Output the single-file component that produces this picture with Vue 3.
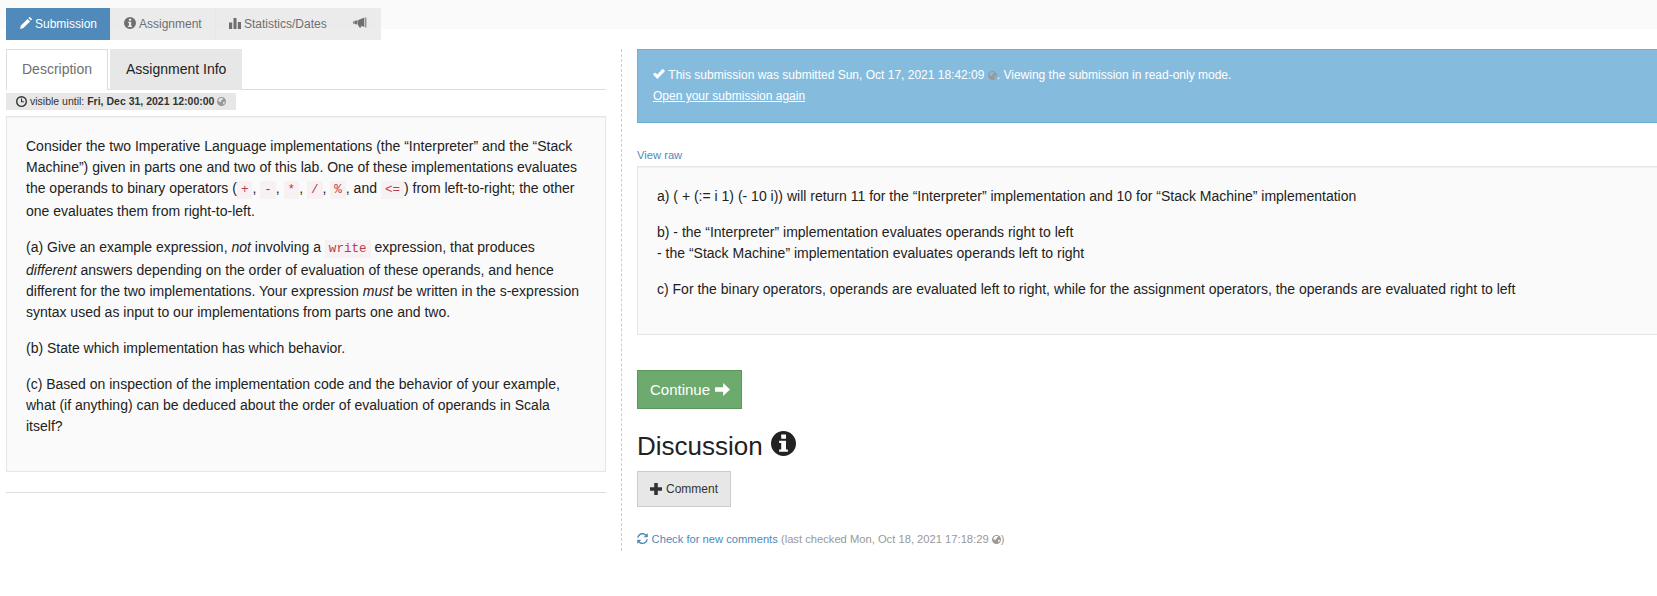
<script setup>
import { h } from 'vue'

const shapes = {
  pencil: ['M0 12 .9 8.6 7.6 1.9 10.1 4.4 3.4 11.1Z M8.4 1.1 9.2.3Q9.7-.2 10.2.3L11.7 1.8Q12.2 2.3 11.7 2.8L10.9 3.6Z'],
  info: ['M6 0A6 6 0 1 0 6 12A6 6 0 1 0 6 0Z M4.9 1.7H7.2V3.7H4.9Z M3.9 4.7H7.2V8.9H8.1V10H3.9V8.9H4.9V5.8H3.9Z'],
  bars: ['M0 5.5H3.2V12H0Z M4.5 1H7.5V12H4.5Z M8.8 5H12V12H8.8Z'],
  horn: ['M0 4.4H1V6.4H0Z M1.4 4 4.4 3.3V7.6L1.4 7Z M4.9 3.2 11.3.6V10L8 8.8 8.4 10.4H6.4L4.9 7.7Z M12.3.6H13.3V10.6H12.3Z'],
  clock: ['M6 0A6 6 0 1 0 6 12A6 6 0 1 0 6 0Z M6 1.5A4.5 4.5 0 1 1 6 10.5A4.5 4.5 0 1 1 6 1.5Z M5.4 2.8H6.6V5.7H8.8V6.9H5.4Z'],
  globe: ['M6 0A6 6 0 1 0 6 12A6 6 0 1 0 6 0Z M5 1.2 7.6 1.4 8.2 2.8 6.8 3.4 6.4 4.8 4.8 5.4 5.2 6.6 4 6.8 1.6 5.2 2.6 2.8Z M8.2 6.6 10.6 6.2 10 8.4 8.2 10Z'],
  check: ['M0 6.5 2 4.4 4.3 6.4 9.7.8 12 3.1 4.3 10.9Z'],
  arrow: ['M0 3.9H7.6V0L14 6 7.6 12V8.1H0Z'],
  plus: ['M4.2 0H7.8V4.2H12V7.8H7.8V12H4.2V7.8H0V4.2H4.2Z'],
  refresh: ['M.2 5.2C.6 2.2 3 0 6 0 7.6 0 9.1.6 10.2 1.7L11.8.2V4.6H7.3L9.1 2.8C8.3 2 7.2 1.5 6 1.5 3.8 1.5 2.1 3 1.7 5.2Z M11.8 6.8C11.4 9.8 9 12 6 12 4.4 12 2.9 11.4 1.8 10.3L.2 11.8V7.4H4.7L2.9 9.2C3.7 10 4.8 10.5 6 10.5 8.2 10.5 9.9 9 10.3 6.8Z'],
}
const boxes = { horn: '0 0 14 12', arrow: '0 0 14 12' }
const Icon = (p) =>
  h('svg', { viewBox: boxes[p.name] || '0 0 12 12', fill: 'currentColor', 'fill-rule': 'evenodd', 'aria-hidden': 'true' },
    shapes[p.name].map((d) => h('path', { d })))
Icon.props = ['name']
</script>

<template>
  <div class="page">
    <header class="top">
      <nav class="menu">
        <a class="item active"><Icon name="pencil" class="ic" />Submission</a>
        <a class="item second"><Icon name="info" class="ic" />Assignment</a>
        <a class="item third"><Icon name="bars" class="ic" />Statistics/Dates</a>
        <a class="item last"><Icon name="horn" class="ic horn" /></a>
      </nav>
    </header>
    <main class="cols">
      <section class="left">
        <div class="tabs">
          <a class="tab current">Description</a>
          <a class="tab other">Assignment Info</a>
        </div>
        <div class="label"><Icon name="clock" class="clock" /><span>visible until: <b>Fri, Dec 31, 2021 12:00:00</b></span><Icon name="globe" class="globe" /></div>
        <div class="panel desc">
          <p>Consider the two Imperative Language implementations (the “Interpreter” and the “Stack Machine”) given in parts one and two of this lab. One of these implementations evaluates the operands to binary operators (<code>+</code>, <code>-</code>, <code>*</code>, <code>/</code>, <code>%</code>, and <code>&lt;=</code>) from left-to-right; the other one evaluates them from right-to-left.</p>
          <p>(a) Give an example expression, <em>not</em> involving a <code>write</code> expression, that produces <em>different</em> answers depending on the order of evaluation of these operands, and hence different for the two implementations. Your expression <em>must</em> be written in the s-expression syntax used as input to our implementations from parts one and two.</p>
          <p>(b) State which implementation has which behavior.</p>
          <p>(c) Based on inspection of the implementation code and the behavior of your example, what (if anything) can be deduced about the order of evaluation of operands in Scala itself?</p>
        </div>
        <hr />
      </section>
      <section class="right">
        <div class="alert">
          <div><Icon name="check" class="ic" />This submission was submitted Sun, Oct 17, 2021 18:42:09 <Icon name="globe" class="globe" />. Viewing the submission in read-only mode.</div>
          <a>Open your submission again</a>
        </div>
        <a class="raw">View raw</a>
        <div class="panel answer">
          <p>a) ( + (:= i 1) (- 10 i)) will return 11 for the “Interpreter” implementation and 10 for “Stack Machine” implementation</p>
          <p>b) - the “Interpreter” implementation evaluates operands right to left<br />- the “Stack Machine” implementation evaluates operands left to right</p>
          <p>c) For the binary operators, operands are evaluated left to right, while for the assignment operators, the operands are evaluated right to left</p>
        </div>
        <button class="go">Continue<Icon name="arrow" class="arrow" /></button>
        <h2>Discussion<Icon name="info" class="big" /></h2>
        <button class="comment"><Icon name="plus" class="ic" />Comment</button>
        <div class="checks"><Icon name="refresh" class="refresh" /><a>Check for new comments</a> (last checked Mon, Oct 18, 2021 17:18:29 <Icon name="globe" class="globe" />)</div>
      </section>
    </main>
  </div>
</template>

<style>
body { margin: 0; background: #fff; }
</style>

<style scoped>
.page { height: 596px; overflow: hidden; font: 14px/21px "Liberation Sans", Arial, sans-serif; color: #222; }
.top { height: 29px; background: #fafafa; padding: 8px 0 0 6px; box-sizing: border-box; }
.menu { display: flex; width: 375px; height: 32px; }
.item { box-sizing: border-box; display: flex; align-items: center; height: 32px; padding: 0 0 0 13px; font-size: 12px; color: #6f6f6f; background: rgba(231, 231, 231, .8); border-left: 1px solid #e7e7e7; }
.item.active { width: 104px; background: #4f8aba; color: #fff; border-left: 1px solid #4f8aba; }
.second { width: 105px; }
.third { width: 125px; }
.last { width: 41px; border-left: 0; }
.ic { width: 12px; height: 12px; margin-right: 3px; flex: none; }
.item .ic { margin-top: -2px; }
.horn { width: 14px; margin: 0; }
.cols { display: flex; align-items: flex-start; margin-top: 20px; }
.left { width: 600px; margin-left: 6px; flex: none; }
.tabs { display: flex; height: 41px; box-sizing: border-box; border-bottom: 1px solid #dcdcdc; }
.tab { box-sizing: border-box; height: 41px; line-height: 38px; padding-left: 15px; border: 1px solid #ddd; border-bottom: 0; }
.current { width: 102px; color: #6f6f6f; background: #fff; }
.other { width: 132px; margin-left: 2px; background: #e7e7e7; border-color: #e7e7e7; }
.label { display: flex; align-items: center; box-sizing: border-box; width: 230px; height: 17px; margin-top: 3px; padding-left: 10px; background: #e7e7e7; color: #333; font-size: 10.5px; line-height: 17px; white-space: pre; }
.clock { width: 11px; height: 11px; margin: -1px 3px 0 0; }
.globe { width: 9px; height: 9px; color: #999; }
.label .globe { margin-left: 3px; }
.panel { box-sizing: border-box; border: 1px solid #e6e6e6; background: #fafafa; padding: 19px; box-shadow: inset 0 1px #f1f1f1; }
.panel p { margin: 0 0 15px; }
.desc { margin-top: 6px; height: 356px; }
.desc p { width: 560px; }
code { font: 12.6px/21px "Liberation Mono", monospace; color: #bd3a48; background: #f7f1f3; padding: 2px 4px; }
hr { margin: 20px 0 0; border: 0; border-top: 1px solid #ddd; }
.right { flex: 1; min-width: 0; height: 502px; margin-left: 15px; padding-left: 15px; border-left: 1px dashed #ccc; display: flex; flex-direction: column; align-items: flex-start; }
.alert { box-sizing: border-box; width: 1040px; height: 74px; padding: 15px; border: 1px solid #6db0d7; background: #85bcde; color: #fff; font-size: 12px; line-height: 21px; flex: none; }
.alert svg { vertical-align: -1px; }
.alert .ic { margin-right: 3.3px; }
.alert a { text-decoration: underline; }
.raw { margin-top: 24px; font-size: 11.2px; line-height: 17px; color: #4f8aba; }
.answer { width: 1040px; height: 169px; margin-top: 2px; flex: none; }
button { box-sizing: border-box; display: flex; align-items: center; font-family: "Liberation Sans", Arial, sans-serif; border-radius: 0; flex: none; }
.go { width: 105px; height: 39px; margin-top: 35px; padding: 0 0 0 12px; border: 1px solid #5a975a; background: #6daa6d; color: #fff; font-size: 15px; }
.arrow { width: 15px; height: 13px; margin: -1px 0 0 4.5px; flex: none; }
h2 { display: flex; align-items: center; height: 36px; margin: 19px 0 0; font-size: 26px; line-height: 36px; font-weight: 400; }
.big { width: 25px; height: 25px; margin: -6px 0 0 8px; }
.comment { width: 94px; height: 36px; margin-top: 7px; padding: 0 0 0 12px; border: 1px solid #ccc; background: #e7e7e7; color: #333; font-size: 12px; }
.comment .ic { margin: -1px 4px 0 0; }
.checks { display: flex; align-items: center; margin-top: 24px; font-size: 11.2px; line-height: 17px; color: #999; white-space: pre; }
.checks a { color: #4f8aba; }
.refresh { width: 11px; height: 11px; margin: -2px 3.6px 0 0; color: #4f8aba; }
</style>
